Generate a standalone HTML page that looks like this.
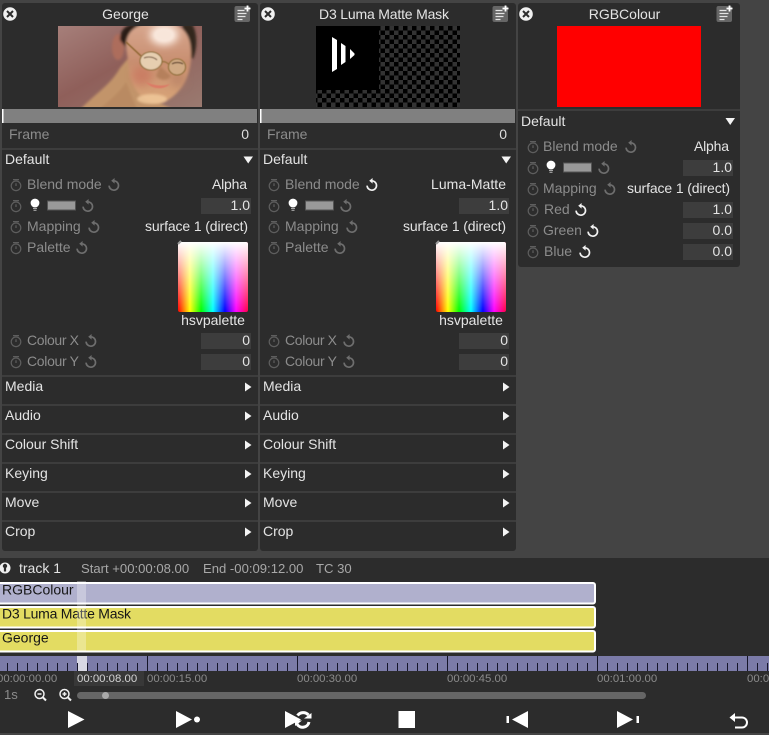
<!DOCTYPE html>
<html><head><meta charset="utf-8"><style>
html,body{margin:0;padding:0;background:#444;width:769px;height:735px;overflow:hidden}
svg{display:block}
text{font-family:"Liberation Sans",sans-serif;font-size:14px;fill:#e4e4e4}
.d{fill:#8c8c8c}
.c{text-anchor:middle}
.r{text-anchor:end}
.l{fill:#a8a8a8;font-size:13.1px}
.k{fill:#161616}
.m{font-size:11.4px;fill:#8c8c8c}
</style></head><body>
<svg width="769" height="735" viewBox="0 0 769 735" xmlns="http://www.w3.org/2000/svg">
<defs>
<linearGradient id="hue" x1="0" x2="1" y1="0" y2="0">
<stop offset="0" stop-color="#f00"/><stop offset=".17" stop-color="#ff0"/><stop offset=".33" stop-color="#0f0"/><stop offset=".5" stop-color="#0ff"/><stop offset=".67" stop-color="#00f"/><stop offset=".83" stop-color="#f0f"/><stop offset="1" stop-color="#f04"/>
</linearGradient>
<linearGradient id="wh" x1="0" x2="0" y1="0" y2="1"><stop offset="0" stop-color="#fff"/><stop offset="1" stop-color="#fff" stop-opacity="0"/></linearGradient>
<linearGradient id="bgp" x1="0" x2="1" y1="0" y2="1"><stop offset="0" stop-color="#a67f7a"/><stop offset=".45" stop-color="#8f5f5a"/><stop offset="1" stop-color="#9a7a70"/></linearGradient>
<linearGradient id="skin" x1="0" x2="0" y1="0" y2="1"><stop offset="0" stop-color="#d8a890"/><stop offset=".5" stop-color="#c88e70"/><stop offset="1" stop-color="#d8a578"/></linearGradient>
<pattern id="chk" width="9" height="9" patternUnits="userSpaceOnUse" x="316" y="26"><rect width="9" height="9" fill="#000"/><rect x="4.5" width="4.5" height="4.5" fill="#333"/><rect y="4.5" width="4.5" height="4.5" fill="#333"/></pattern>
<pattern id="tick" width="10" height="8" patternUnits="userSpaceOnUse" x="7" y="663"><rect width="1" height="8" fill="#15152a"/></pattern>
<filter id="b0" x="-20%" y="-20%" width="140%" height="140%"><feGaussianBlur stdDeviation=".5"/></filter>
<filter id="b1" x="-20%" y="-20%" width="140%" height="140%"><feGaussianBlur stdDeviation="1.2"/></filter>
<filter id="b3" x="-50%" y="-50%" width="200%" height="200%"><feGaussianBlur stdDeviation="4"/></filter>
<clipPath id="ph"><rect width="144" height="81"/></clipPath>
<symbol id="sw" overflow="visible" viewBox="-6 -6 12 12" width="12" height="12"><g fill="none" stroke="#5e5e5e" stroke-width="1.2"><circle cx="0" cy=".8" r="4.8"/><path d="M-3-5.4H3M0-1.8V1"/></g></symbol>
<symbol id="re" overflow="visible" viewBox="-7 -7 14 14" width="14" height="14"><path d="M-.5-4.2A4.7 4.7 0 1 1-4.9.6" fill="none" stroke="#6e6e6e" stroke-width="1.7"/><path d="M-2.8-4.2L.6-7V-1.4Z" fill="#6e6e6e"/></symbol>
<symbol id="rw" overflow="visible" viewBox="-7 -7 14 14" width="14" height="14"><path d="M-.5-4.2A4.7 4.7 0 1 1-4.9.6" fill="none" stroke="#f2f2f2" stroke-width="1.7"/><path d="M-2.8-4.2L.6-7V-1.4Z" fill="#f2f2f2"/></symbol>
<symbol id="cl" overflow="visible" viewBox="-7 -7 14 14" width="14" height="14"><circle r="6.8" fill="#f0f0f0"/><path d="M-3-3L3 3M3-3L-3 3" stroke="#2c2c2c" stroke-width="2"/></symbol>
<symbol id="nt" overflow="visible" viewBox="0 0 16 16" width="16" height="16"><rect x="0" y="0" width="15.500" height="16" rx="2" fill="#666"/><path d="M3 4.500H10M3 7.500H12M3 10.500H11M3 13.500H8" stroke="#e4e4e4" stroke-width="1.300"/><path d="M13 -.5V5.500M10 2.500H16" stroke="#fff" stroke-width="1.800"/></symbol>
<symbol id="bl" overflow="visible" viewBox="-5 -6 10 14" width="10" height="14"><circle cy="-1" r="4.400" fill="#fff"/><path d="M-2 4.400H2M-1.500 6.200H1.500" stroke="#bbb" stroke-width="1"/></symbol>
</defs>
<rect width="769" height="735" fill="#444"/>

<!-- Panel 1 -->
<g id="p1">
<rect x="2" y="3" width="256" height="548" rx="3" fill="#2c2c2c"/>
<rect x="2" y="148" width="256" height="2" fill="#3d3d3d"/>
<use href="#cl" x="3" y="7"/>
<text x="125.500" y="19" class="c">George</text>
<use href="#nt" x="234.500" y="6"/>
<g transform="translate(58 26)" clip-path="url(#ph)">
<rect width="144" height="81" fill="url(#bgp)"/>
<g filter="url(#b1)">
<path d="M22 84C34 70 52 60 62 42L72 30 92 72 116 84Z" fill="#c2946a"/>
<path d="M40 84C52 74 62 66 68 56L76 76 80 84Z" fill="#b98a62"/>
<ellipse cx="60" cy="21" rx="6" ry="13" fill="#ad6d5c"/>
<path d="M62 14C62 4 68-2 78-2H92C80 2 72 8 70 24Z" fill="#2a1f18"/>
<path d="M124-2H134C139 6 140 20 135 33L129 30Z" fill="#33261d"/>
<path d="M68 20C68 4 80-4 102-4 122-4 133 6 133 26 134 48 124 68 106 76 90 80 78 70 72 50Z" fill="url(#skin)"/>
</g>
<ellipse cx="106" cy="9" rx="14" ry="10" fill="#fff2e8" filter="url(#b3)"/>
<ellipse cx="106" cy="9" rx="9" ry="6" fill="#f8e6da" filter="url(#b1)"/>
<ellipse cx="84" cy="50" rx="10" ry="10" fill="#c86c58" opacity=".55" filter="url(#b3)"/>
<ellipse cx="120" cy="54" rx="8" ry="8" fill="#b07a60" opacity=".5" filter="url(#b3)"/>
<ellipse cx="94" cy="73" rx="15" ry="5" fill="#f2ca9c" opacity=".8" filter="url(#b1)"/>
<g filter="url(#b0)">
<path d="M68 16L83 30" stroke="#86602a" stroke-width="1.200"/>
<ellipse cx="93" cy="35" rx="11" ry="9" fill="#e6ceb0" stroke="#8a6a30" stroke-width="1.100"/>
<ellipse cx="119" cy="41" rx="8.500" ry="8" fill="#d0aa84" stroke="#8a6a30" stroke-width="1.100"/>
<path d="M86 32C90 30 96 31 99 34" stroke="#6a4a30" fill="none" stroke-width="1"/><path d="M114 38C117 36 122 36 125 38" stroke="#5a3c28" fill="none" stroke-width="1.200"/>
<path d="M104 36C106 35 108 36 110.500 38" stroke="#8a6a30" fill="none"/>
</g>
<path d="M102 40L98 50C102 55 110 55 113 50Z" fill="#b5805c" filter="url(#b1)"/>
<path d="M88 56C94 59 104 61 112 58 106 64 94 64 88 56Z" fill="#dc7a66" filter="url(#b0)"/>
</g>
<rect x="2" y="109" width="255" height="14" fill="#808080"/><rect x="2" y="109" width="1.500" height="14" fill="#fff"/>
<text x="9" y="139" class="d">Frame</text><text x="249" y="139" class="r" style="fill:#ddd">0</text>
<text x="5" y="164">Default</text><path d="M243.500 156.500H253L248.200 163.500Z" fill="#f4f4f4"/>
<use href="#sw" x="10" y="179"/><text x="27" y="189" class="d">Blend mode</text><use href="#re" x="107" y="178"/><text x="212" y="189" textLength="35">Alpha</text>
<use href="#sw" x="10" y="200"/><use href="#bl" x="30" y="198"/><rect x="47.500" y="201" width="28" height="9" fill="#999" stroke="#555"/><use href="#re" x="81" y="199"/><rect x="201" y="198" width="50" height="16" fill="#3d3d3d"/><text x="250" y="210" class="r">1.0</text>
<use href="#sw" x="10" y="221"/><text x="27" y="231" class="d">Mapping</text><use href="#re" x="87" y="220"/><text x="145" y="231" textLength="103">surface 1 (direct)</text>
<use href="#sw" x="10" y="242"/><text x="27" y="252" class="d">Palette</text><use href="#re" x="75" y="241"/>
<rect x="178" y="242" width="70" height="70" rx="2" fill="url(#hue)"/><rect x="178" y="242" width="70" height="70" rx="2" fill="url(#wh)"/><path d="M178 244L181 241" stroke="#999" stroke-width="2"/>
<text x="213" y="325" class="c">hsvpalette</text>
<use href="#sw" x="10" y="335"/><text x="27" y="345" class="d" textLength="52">Colour X</text><use href="#re" x="84" y="334"/><rect x="201" y="333" width="50" height="16" fill="#3d3d3d"/><text x="250" y="345" class="r">0</text>
<use href="#sw" x="10" y="356"/><text x="27" y="366" class="d" textLength="52">Colour Y</text><use href="#re" x="84" y="355"/><rect x="201" y="354" width="50" height="16" fill="#3d3d3d"/><text x="250" y="366" class="r">0</text>
<g fill="#3d3d3d"><rect x="2" y="375" width="256" height="2"/><rect x="2" y="404" width="256" height="2"/><rect x="2" y="433" width="256" height="2"/><rect x="2" y="462" width="256" height="2"/><rect x="2" y="491" width="256" height="2"/><rect x="2" y="520" width="256" height="2"/></g>
<text x="5" y="391">Media</text><text x="5" y="420">Audio</text><text x="5" y="449">Colour Shift</text><text x="5" y="478">Keying</text><text x="5" y="507">Move</text><text x="5" y="536">Crop</text>
<g fill="#f4f4f4"><path d="M245 382.500L251.500 387 245 391.500Z"/><path d="M245 411.500L251.500 416 245 420.500Z"/><path d="M245 440.500L251.500 445 245 449.500Z"/><path d="M245 469.500L251.500 474 245 478.500Z"/><path d="M245 498.500L251.500 503 245 507.500Z"/><path d="M245 527.500L251.500 532 245 536.500Z"/></g>
</g>

<!-- Panel 2 -->
<g id="p2" transform="translate(258 0)">
<rect x="2" y="3" width="256" height="548" rx="3" fill="#2c2c2c"/>
<rect x="2" y="148" width="256" height="2" fill="#3d3d3d"/>
<use href="#cl" x="3" y="7"/>
<text x="61" y="19" textLength="130">D3 Luma Matte Mask</text>
<use href="#nt" x="234.500" y="6"/>
<rect x="58" y="26" width="144" height="81" fill="url(#chk)"/>
<rect x="58" y="26" width="63" height="64" fill="#000"/>
<path d="M74 37L79 40V69L74 72Z" fill="#fff"/><path d="M83 43L87.500 46V62L83 65Z" fill="#fff"/><path d="M92 49L96.500 53.500V55L92 59Z" fill="#fff"/>
<rect x="2" y="109" width="255" height="14" fill="#808080"/><rect x="2" y="109" width="1.500" height="14" fill="#fff"/>
<text x="9" y="139" class="d">Frame</text><text x="249" y="139" class="r" style="fill:#ddd">0</text>
<text x="5" y="164">Default</text><path d="M243.500 156.500H253L248.200 163.500Z" fill="#f4f4f4"/>
<use href="#sw" x="10" y="179"/><text x="27" y="189" class="d">Blend mode</text><use href="#rw" x="107" y="178"/><text x="173" y="189" textLength="75">Luma-Matte</text>
<use href="#sw" x="10" y="200"/><use href="#bl" x="30" y="198"/><rect x="47.500" y="201" width="28" height="9" fill="#999" stroke="#555"/><use href="#re" x="81" y="199"/><rect x="201" y="198" width="50" height="16" fill="#3d3d3d"/><text x="250" y="210" class="r">1.0</text>
<use href="#sw" x="10" y="221"/><text x="27" y="231" class="d">Mapping</text><use href="#re" x="87" y="220"/><text x="145" y="231" textLength="103">surface 1 (direct)</text>
<use href="#sw" x="10" y="242"/><text x="27" y="252" class="d">Palette</text><use href="#re" x="75" y="241"/>
<rect x="178" y="242" width="70" height="70" rx="2" fill="url(#hue)"/><rect x="178" y="242" width="70" height="70" rx="2" fill="url(#wh)"/><path d="M178 244L181 241" stroke="#999" stroke-width="2"/>
<text x="213" y="325" class="c">hsvpalette</text>
<use href="#sw" x="10" y="335"/><text x="27" y="345" class="d" textLength="52">Colour X</text><use href="#re" x="84" y="334"/><rect x="201" y="333" width="50" height="16" fill="#3d3d3d"/><text x="250" y="345" class="r">0</text>
<use href="#sw" x="10" y="356"/><text x="27" y="366" class="d" textLength="52">Colour Y</text><use href="#re" x="84" y="355"/><rect x="201" y="354" width="50" height="16" fill="#3d3d3d"/><text x="250" y="366" class="r">0</text>
<g fill="#3d3d3d"><rect x="2" y="375" width="256" height="2"/><rect x="2" y="404" width="256" height="2"/><rect x="2" y="433" width="256" height="2"/><rect x="2" y="462" width="256" height="2"/><rect x="2" y="491" width="256" height="2"/><rect x="2" y="520" width="256" height="2"/></g>
<text x="5" y="391">Media</text><text x="5" y="420">Audio</text><text x="5" y="449">Colour Shift</text><text x="5" y="478">Keying</text><text x="5" y="507">Move</text><text x="5" y="536">Crop</text>
<g fill="#f4f4f4"><path d="M245 382.500L251.500 387 245 391.500Z"/><path d="M245 411.500L251.500 416 245 420.500Z"/><path d="M245 440.500L251.500 445 245 449.500Z"/><path d="M245 469.500L251.500 474 245 478.500Z"/><path d="M245 498.500L251.500 503 245 507.500Z"/><path d="M245 527.500L251.500 532 245 536.500Z"/></g>
</g>

<!-- Panel 3 -->
<rect x="518" y="3" width="222" height="264" rx="3" fill="#2c2c2c"/>
<rect x="518" y="109" width="222" height="2" fill="#3d3d3d"/>
<use href="#cl" x="519" y="7"/>
<text x="624.500" y="19" class="c">RGBColour</text>
<use href="#nt" x="716.500" y="6"/>
<rect x="557" y="26" width="144" height="81" fill="#f00"/>
<text x="521" y="126">Default</text><path d="M725.500 118H735L730.200 125Z" fill="#f4f4f4"/>
<use href="#sw" x="527" y="141"/><text x="543" y="151" class="d">Blend mode</text><use href="#re" x="624" y="140"/><text x="694" y="151" textLength="35">Alpha</text>
<use href="#sw" x="527" y="162"/><use href="#bl" x="546" y="160"/><rect x="563.500" y="163" width="28" height="9" fill="#999" stroke="#555"/><use href="#re" x="597" y="161"/><rect x="683" y="160" width="50" height="16" fill="#3d3d3d"/><text x="732" y="172" class="r">1.0</text>
<use href="#sw" x="527" y="183"/><text x="543" y="193" class="d">Mapping</text><use href="#re" x="603" y="182"/><text x="627" y="193" textLength="103">surface 1 (direct)</text>
<use href="#sw" x="527" y="204"/><text x="544" y="214" class="d">Red</text><use href="#rw" x="574" y="203"/><rect x="683" y="202" width="50" height="16" fill="#3d3d3d"/><text x="732" y="214" class="r">1.0</text>
<use href="#sw" x="527" y="225"/><text x="543" y="235" class="d">Green</text><use href="#rw" x="586" y="224"/><rect x="683" y="223" width="50" height="16" fill="#3d3d3d"/><text x="732" y="235" class="r">0.0</text>
<use href="#sw" x="527" y="246"/><text x="544" y="256" class="d">Blue</text><use href="#rw" x="578" y="245"/><rect x="683" y="244" width="50" height="16" fill="#3d3d3d"/><text x="732" y="256" class="r">0.0</text>

<!-- Timeline -->
<rect x="0" y="558" width="769" height="175" fill="#2c2c2c"/>
<circle cx="5" cy="568" r="5.500" fill="#f0f0f0"/><path d="M5 565.500V571.500" stroke="#2c2c2c" stroke-width="2.200"/><circle cx="5" cy="566" r="2.200" fill="#2c2c2c"/>
<text x="19" y="573">track 1</text>
<text x="81" y="573" class="l">Start +00:00:08.00</text>
<text x="203" y="573" class="l">End -00:09:12.00</text>
<text x="316" y="573" class="l">TC 30</text>

<rect x="-4" y="583" width="599" height="20.500" rx="2" fill="#b0b0cd" stroke="#fff" stroke-width="2"/>
<rect x="-4" y="607" width="599" height="20.500" rx="2" fill="#e3dc62" stroke="#fff" stroke-width="2"/>
<rect x="-4" y="631" width="599" height="20.500" rx="2" fill="#e3dc62" stroke="#fff" stroke-width="2"/>
<text x="2" y="594.500" class="k">RGBColour</text>
<text x="2" y="618.500" class="k" textLength="129">D3 Luma Matte Mask</text>
<text x="2" y="642.500" class="k">George</text>
<rect x="77" y="581" width="9" height="71" fill="#fff" opacity=".3"/>

<rect x="0" y="656" width="769" height="15" fill="#7b7ba8"/>
<rect x="77" y="656" width="10" height="15" fill="#d8d8e4"/>
<rect x="0" y="663" width="769" height="8" fill="url(#tick)"/>
<g fill="#15152a"><rect x="147" y="656" width="1" height="15"/><rect x="297" y="656" width="1" height="15"/><rect x="447" y="656" width="1" height="15"/><rect x="597" y="656" width="1" height="15"/><rect x="747" y="656" width="1" height="15"/></g>
<text x="-3" y="682" class="m">00:00:00.00</text>
<rect x="74" y="671" width="70" height="15" fill="#383838"/>
<text x="77" y="682" class="m" style="fill:#d4d4d4">00:00:08.00</text>
<text x="147" y="682" class="m">00:00:15.00</text>
<text x="297" y="682" class="m">00:00:30.00</text>
<text x="447" y="682" class="m">00:00:45.00</text>
<text x="597" y="682" class="m">00:01:00.00</text>
<text x="747" y="682" class="m">00:01:15.00</text>

<text x="4" y="699" class="l" style="fill:#8c8c8c">1s</text>
<g fill="none" stroke="#f0f0f0" stroke-width="1.500"><circle cx="39.500" cy="694" r="4.500"/><path d="M43 697.500L46 700.500" stroke-width="2"/><path d="M37.500 694H41.500"/><circle cx="64.500" cy="694" r="4.500"/><path d="M68 697.500L71 700.500" stroke-width="2"/><path d="M62.500 694H66.500M64.500 692V696"/></g>
<rect x="77" y="692" width="569" height="7" rx="3.500" fill="#666"/>
<circle cx="105.500" cy="695.500" r="3.500" fill="#aaa"/>

<g fill="#fff">
<path d="M68 711L84.500 719.500 68 728Z"/>
<path d="M176 711L192 719.500 176 728Z"/><circle cx="197" cy="719.500" r="3"/>
<path d="M285 711L301 719.500 285 728Z"/>
<rect x="398.500" y="711" width="16.500" height="17"/>
<rect x="506.500" y="716" width="2.500" height="7"/><path d="M528 711V728L512 719.500Z"/>
<path d="M617 711V728L633 719.500Z"/><rect x="636.500" y="716" width="2.500" height="7"/>
</g>
<g fill="none" stroke="#fff" stroke-width="3"><path d="M297.500 715.500A7 7 0 0 1 308.500 715"/><path d="M309 722A6.500 6.500 0 0 1 297 724"/></g>
<path d="M304 718.500H311.500V713ZM302 720.500H295V726Z" fill="#fff"/>
<path d="M733 717.500H742A5 5 0 0 1 742 727.500H735" fill="none" stroke="#fff" stroke-width="2"/><path d="M729.500 717.500L735 713V722Z" fill="#fff"/>
</svg>
</body></html>
